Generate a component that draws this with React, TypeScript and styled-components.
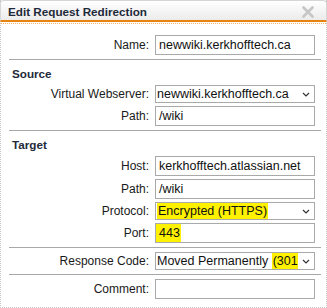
import styled, { createGlobalStyle } from "styled-components";

const Global = createGlobalStyle`
	body {
		margin: 0;
		background: #fff;
		font-family: "Liberation Sans", Arial, sans-serif;
	}
`;

const Dialog = styled.div`
	width: 327px;
	height: 308px;
	box-sizing: border-box;
	border-left: 1px dotted #c4c4c4;
	border-right: 1px dotted #c4c4c4;
	border-bottom: 1px dotted #c4c4c4;
	display: flex;
	flex-direction: column;
`;

const TitleBar = styled.div`
	height: 27px;
	box-sizing: border-box;
	margin: 0 -1px;
	display: flex;
	align-items: center;
	justify-content: space-between;
	padding: 2px 12px 0 7px;
	border: 1px solid #d6d6d6;
	border-bottom: 2px solid #e8830f;
	border-radius: 4px 4px 0 0;
	background: linear-gradient(#ffffff, #ebebeb);
`;

const Title = styled.h1`
	margin: 0;
	font-size: 11.7px;
	font-weight: bold;
	color: #1e2a3a;
`;

const Body = styled.div`
	margin-top: 1px;
	border-top: 1px dotted #f3b36a;
	padding: 11px 5px 0 8px;
	display: flex;
	flex-direction: column;
`;

const Section = styled.div<{ $last?: boolean }>`
	display: flex;
	flex-direction: column;
	gap: 3px;
	padding-bottom: 4px;
	border-bottom: ${({ $last }) => ($last ? "none" : "1px solid #a8a8a8")};
	margin-bottom: 4px;
`;

const SectionTitle = styled.div`
	font-size: 11.7px;
	line-height: 13px;
	font-weight: bold;
	color: #1e2a3a;
	padding: 3px 0 2px 3px;
`;

const Row = styled.div`
	display: grid;
	grid-template-columns: 140px 160px;
	column-gap: 6px;
	align-items: center;
`;

const Label = styled.label`
	text-align: right;
	font-size: 12px;
	color: #1a1a1a;
`;

const Input = styled.div`
	height: 20px;
	box-sizing: border-box;
	border: 1px solid #a9a9a9;
	background: #fff;
	padding: 0 3px;
	display: flex;
	align-items: stretch;
	font-size: 12.5px;
	line-height: 18px;
	color: #111;
	white-space: nowrap;
	overflow: hidden;
`;

const Select = styled(Input)`
	height: 18px;
	padding: 0 0 0 1px;
	position: relative;
	font-size: 12.5px;
	line-height: 16px;
`;

const Chevron = styled.span`
	position: absolute;
	right: 0;
	top: 0;
	bottom: 0;
	width: 16px;
	background: #fff;
	display: flex;
	align-items: center;
	justify-content: center;
`;

const Text = styled.span`
	white-space: pre;
`;

const Mark = styled.mark<{ $pull?: boolean }>`
	background: #fff200;
	color: #111;
	padding: 0 1px;
	margin-left: ${({ $pull }) => ($pull ? "-3px" : "0")};
	padding-left: ${({ $pull }) => ($pull ? "3px" : "1px")};
`;

function Arrow() {
	return (
		<Chevron>
			<svg width="8" height="5" viewBox="0 0 8 5">
				<path d="M1 1l3 3 3-3" fill="none" stroke="#333" strokeWidth="1.2" />
			</svg>
		</Chevron>
	);
}

function Close() {
	return (
		<svg width="12" height="12" viewBox="0 0 12 12">
			<path
				d="M1.5 1.5l9 9M10.5 1.5l-9 9"
				stroke="#c6c6c6"
				strokeWidth="2.6"
				strokeLinecap="round"
			/>
		</svg>
	);
}

export default function App() {
	return (
		<>
			<Global />
			<Dialog>
				<TitleBar>
					<Title>Edit Request Redirection</Title>
					<Close />
				</TitleBar>
				<Body>
					<Section>
						<Row>
							<Label>Name:</Label>
							<Input>newwiki.kerkhofftech.ca</Input>
						</Row>
					</Section>
					<Section>
						<SectionTitle>Source</SectionTitle>
						<Row>
							<Label>Virtual Webserver:</Label>
							<Select>
								<Text>newwiki.kerkhofftech.ca</Text>
								<Arrow />
							</Select>
						</Row>
						<Row>
							<Label>Path:</Label>
							<Input>/wiki</Input>
						</Row>
					</Section>
					<Section>
						<SectionTitle>Target</SectionTitle>
						<Row>
							<Label>Host:</Label>
							<Input>kerkhofftech.atlassian.net</Input>
						</Row>
						<Row>
							<Label>Path:</Label>
							<Input>/wiki</Input>
						</Row>
						<Row>
							<Label>Protocol:</Label>
							<Select>
								<Mark>Encrypted (HTTPS)</Mark>
								<Arrow />
							</Select>
						</Row>
						<Row>
							<Label>Port:</Label>
							<Input>
								<Mark $pull>443 </Mark>
							</Input>
						</Row>
					</Section>
					<Section>
						<Row>
							<Label>Response Code:</Label>
							<Select>
								<Text>Moved Permanently </Text>
								<Mark>(301)</Mark>
								<Arrow />
							</Select>
						</Row>
					</Section>
					<Section $last>
						<Row>
							<Label>Comment:</Label>
							<Input />
						</Row>
					</Section>
				</Body>
			</Dialog>
		</>
	);
}
